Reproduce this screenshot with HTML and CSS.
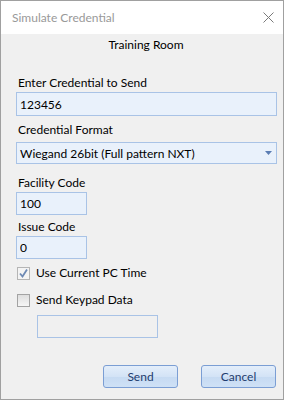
FILE: index.html
```html
<!DOCTYPE html>
<html>
<head>
  <title>Simulate Credential</title>
  <link rel="stylesheet" href="styles.css">
</head>
<body>
  <div class="window">
    <div class="titlebar">
      <span class="title">Simulate Credential</span>
      <svg class="close" width="11" height="11" viewBox="0 0 11 11">
        <path d="M0.5 0.5 L10.5 10.5 M10.5 0.5 L0.5 10.5" stroke="#7a7a7a" stroke-width="1" fill="none"/>
      </svg>
    </div>

    <div class="content">
      <div class="location">Training Room</div>

      <label class="field-label lbl-credential">Enter Credential to Send</label>
      <input class="textbox wide" type="text" value="123456">

      <label class="field-label lbl-format">Credential Format</label>
      <div class="combo">
        <span>Wiegand 26bit (Full pattern NXT)</span>
        <svg class="arrow" width="7" height="4" viewBox="0 0 7 4">
          <path d="M0 0 H7 L3.5 4 Z" fill="#5b7db3"/>
        </svg>
      </div>

      <label class="field-label lbl-facility">Facility Code</label>
      <input class="textbox short" type="text" value="100">

      <label class="field-label lbl-issue">Issue Code</label>
      <input class="textbox short" type="text" value="0">

      <div class="check-row row-time">
        <span class="checkbox checked">
          <svg width="11" height="11" viewBox="0 0 11 11">
            <path d="M2 5.5 L4.5 8.5 L9 1.5" stroke="#6d89b4" stroke-width="1.8" fill="none"/>
          </svg>
        </span>
        <span>Use Current PC Time</span>
      </div>

      <div class="check-row row-keypad">
        <span class="checkbox"></span>
        <span>Send Keypad Data</span>
      </div>

      <div class="keypad-box"></div>

      <div class="buttons">
        <button class="btn">Send</button>
        <button class="btn">Cancel</button>
      </div>
    </div>
  </div>
</body>
</html>
```

FILE: styles.css
```css
body {
  margin: 0;
  background-color: white;
  font-family: Lato, "Noto Sans", sans-serif;
  font-size: 12px;
  color: #000;
}
.window {
  width: 284px;
  height: 400px;
  box-sizing: border-box;
  border: 1px solid #a0a0a0;
  display: flex;
  flex-direction: column;
}
.titlebar {
  height: 33px;
  background-color: white;
  display: flex;
  align-items: center;
  padding-left: 11px;
}
.title {
  color: #999;
}
.close {
  margin-left: auto;
  margin-right: 9px;
}
.content {
  flex: 1;
  background-color: #f0f0f0;
  padding: 3px 7px 0 15px;
  display: flex;
  flex-direction: column;
  align-items: flex-start;
}
.location {
  align-self: stretch;
  text-align: center;
  line-height: 16px;
}
.field-label {
  display: block;
  line-height: 16px;
  padding-left: 2px;
  margin-bottom: 1px;
}
.lbl-credential { margin-top: 22px; }
.lbl-format { margin-top: 6px; margin-bottom: 4px; }
.lbl-facility { margin-top: 11px; }
.lbl-issue { margin-top: 4px; }
.textbox {
  box-sizing: border-box;
  font: inherit;
  color: #000;
  background-color: #e9f1fb;
  border: 1px solid #a9c3e6;
  padding: 0 0 0 3px;
  margin: 0;
  outline: none;
}
.wide {
  width: 261px;
  height: 24px;
}
.short {
  width: 71px;
  height: 23px;
}
.combo {
  box-sizing: border-box;
  width: 261px;
  height: 22px;
  background-color: #e9f1fb;
  border: 1px solid #a9c3e6;
  padding: 0 4px 0 3px;
  display: flex;
  align-items: center;
  justify-content: space-between;
}
.check-row {
  display: flex;
  align-items: center;
  gap: 6px;
  line-height: 16px;
  padding-left: 1px;
}
.row-time { margin-top: 6px; }
.row-keypad { margin-top: 11px; }
.checkbox {
  box-sizing: border-box;
  width: 13px;
  height: 13px;
  border: 1px solid #a3a3a3;
  background: linear-gradient(#dedede, #f6f6f6);
  display: flex;
  align-items: center;
  justify-content: center;
}
.checkbox.checked {
  border-color: #b5b5b5;
  background: #f4f4f4;
}
.keypad-box {
  box-sizing: border-box;
  width: 121px;
  height: 23px;
  border: 1px solid #a9c3e6;
  margin: 7px 0 0 21px;
}
.buttons {
  align-self: stretch;
  display: flex;
  justify-content: flex-end;
  gap: 23px;
  margin-top: 27px;
}
.btn {
  box-sizing: border-box;
  width: 75px;
  height: 23px;
  font: inherit;
  color: #1e3c6e;
  border: 1px solid #7b9ed4;
  border-radius: 3px;
  background: linear-gradient(#e4eefa, #d3e3f6 50%, #c6daf2 51%, #cfe1f6);
  padding: 0;
}
```
